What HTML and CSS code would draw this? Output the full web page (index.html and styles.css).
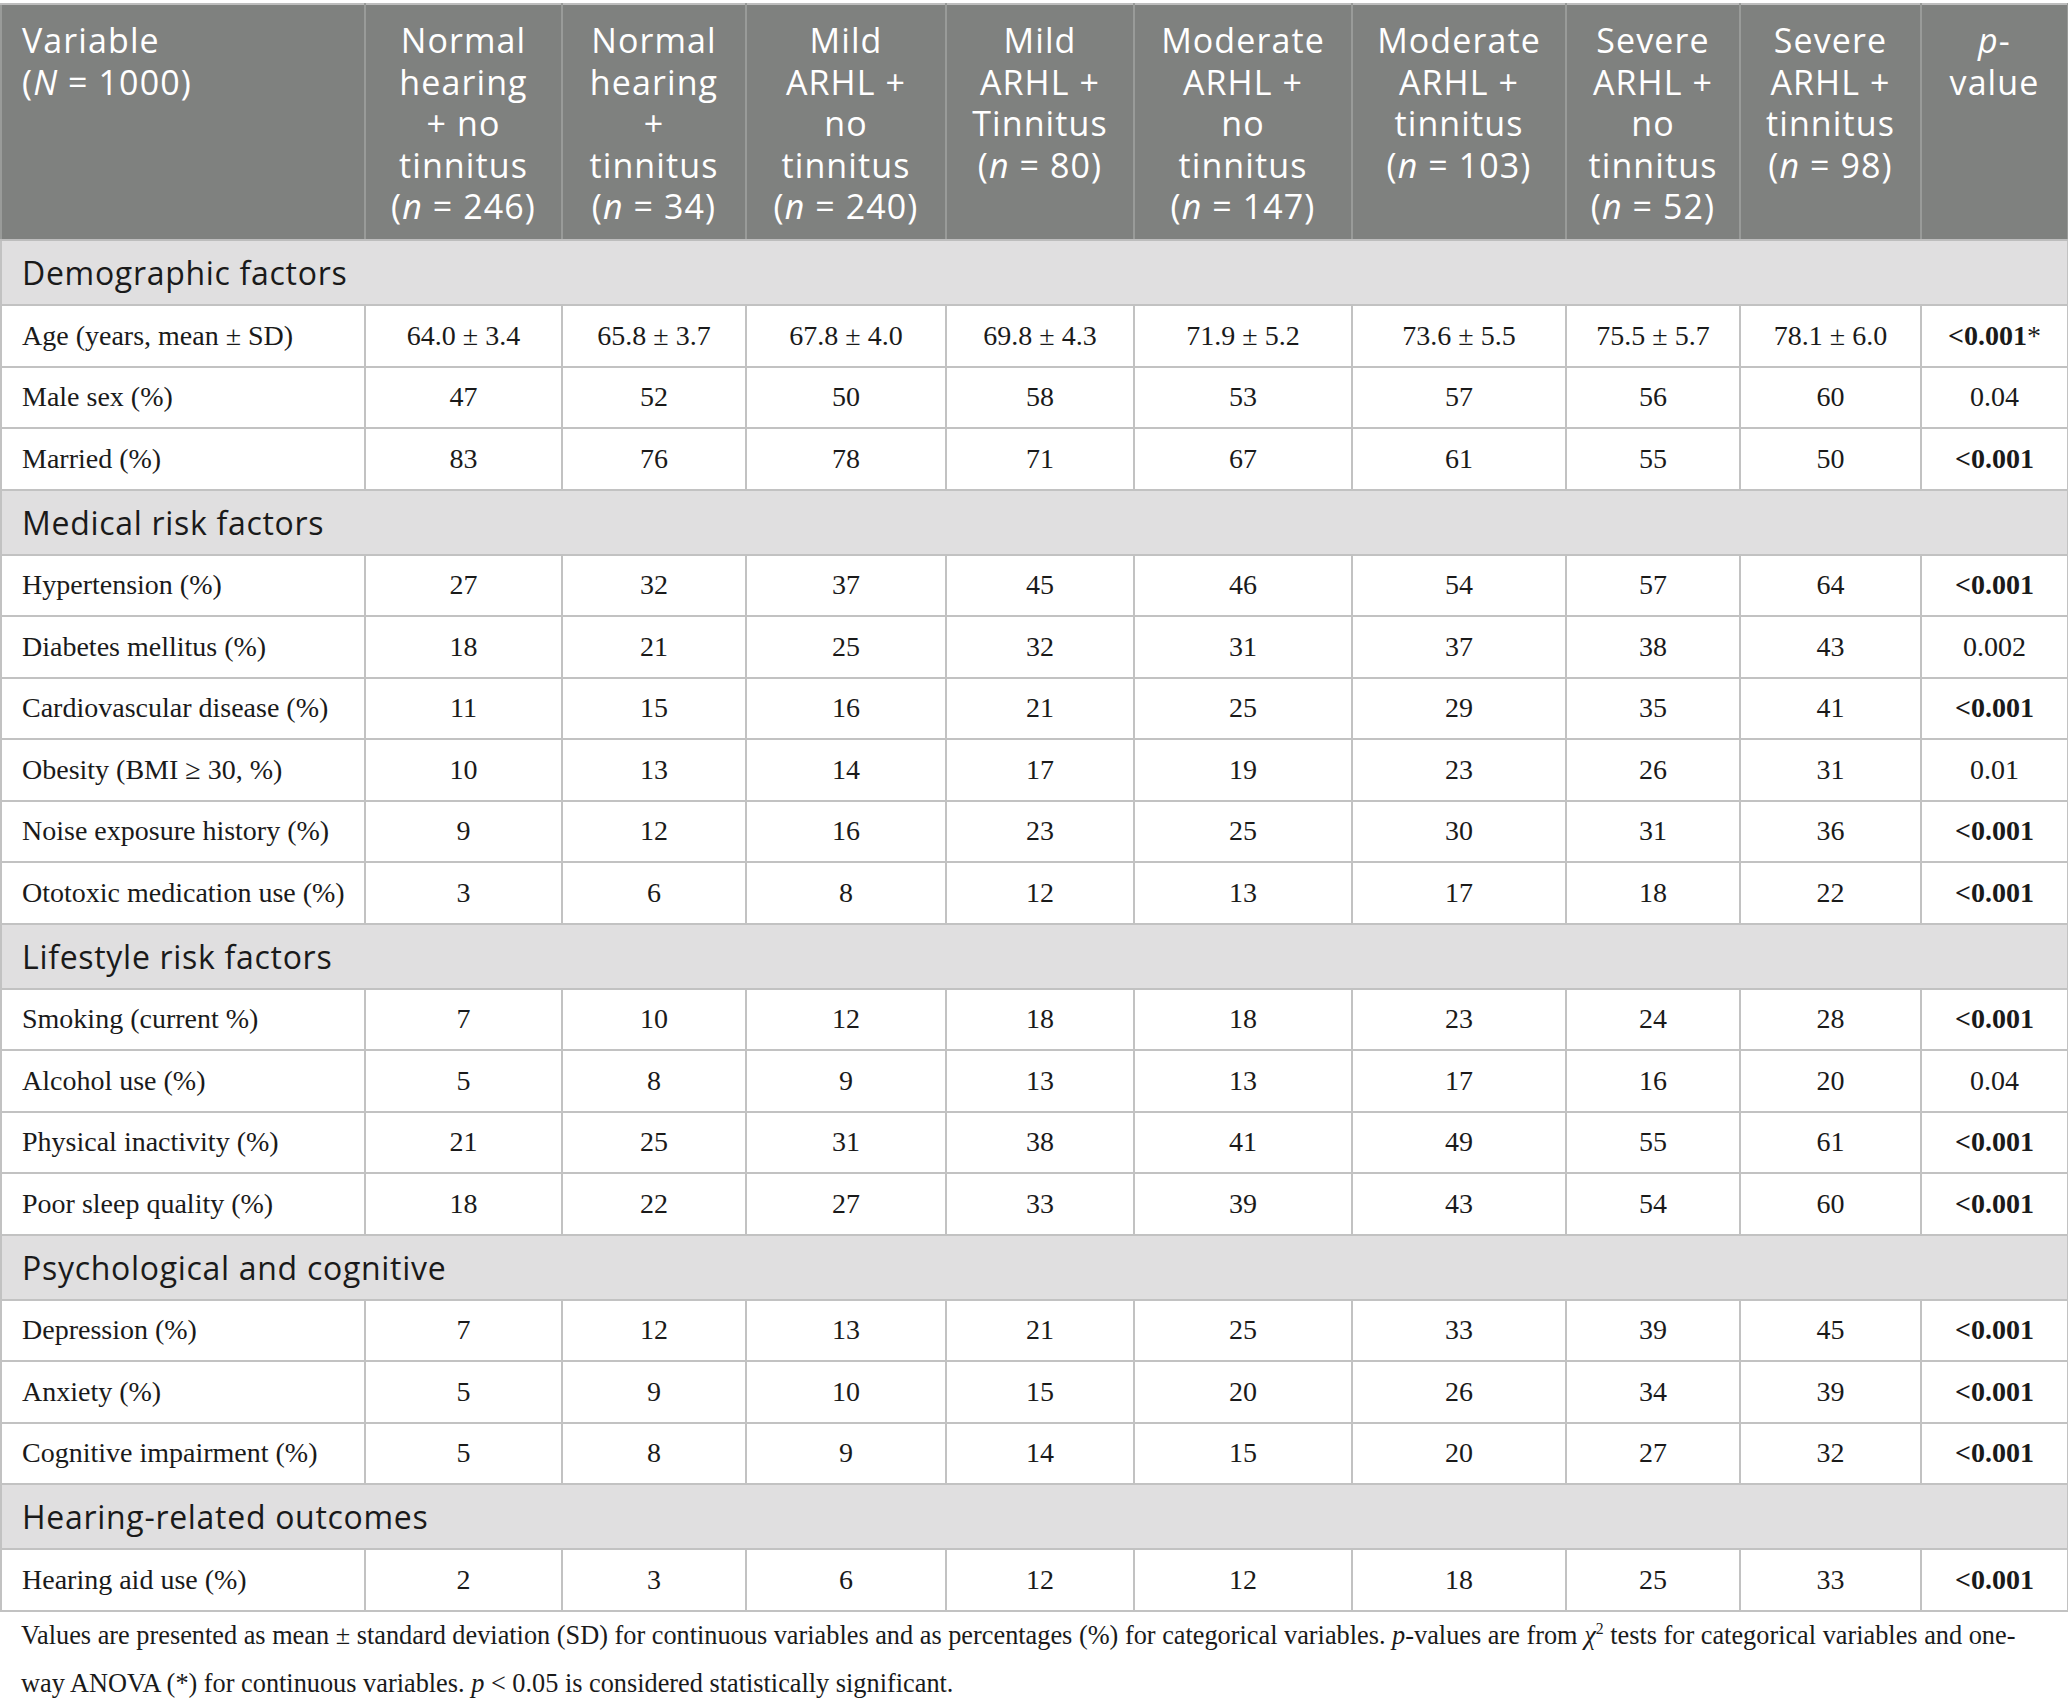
FILE: index.html
```html
<!DOCTYPE html>
<html lang="en">
<head>
<meta charset="utf-8">
<title>Table</title>
<link rel="stylesheet" href="styles.css">
</head>
<body>
<div class="page">
<table class="data-table">
  <colgroup>
    <col class="c-var">
    <col class="c1"><col class="c2"><col class="c3"><col class="c4">
    <col class="c5"><col class="c6"><col class="c7"><col class="c8">
    <col class="c-p">
  </colgroup>
  <thead>
    <tr class="head-row">
      <th class="var">Variable<br>(<i>N</i> = 1000)</th>
      <th>Normal<br>hearing<br>+ no<br>tinnitus<br>(<i>n</i> = 246)</th>
      <th>Normal<br>hearing<br>+<br>tinnitus<br>(<i>n</i> = 34)</th>
      <th>Mild<br>ARHL +<br>no<br>tinnitus<br>(<i>n</i> = 240)</th>
      <th>Mild<br>ARHL +<br>Tinnitus<br>(<i>n</i> = 80)</th>
      <th>Moderate<br>ARHL +<br>no<br>tinnitus<br>(<i>n</i> = 147)</th>
      <th>Moderate<br>ARHL +<br>tinnitus<br>(<i>n</i> = 103)</th>
      <th>Severe<br>ARHL +<br>no<br>tinnitus<br>(<i>n</i> = 52)</th>
      <th>Severe<br>ARHL +<br>tinnitus<br>(<i>n</i> = 98)</th>
      <th><i>p</i>-<br>value</th>
    </tr>
  </thead>
  <tbody>
    <tr class="section-row"><td colspan="10">Demographic factors</td></tr>
    <tr class="body-row"><td class="label">Age (years, mean ± SD)</td><td>64.0 ± 3.4</td><td>65.8 ± 3.7</td><td>67.8 ± 4.0</td><td>69.8 ± 4.3</td><td>71.9 ± 5.2</td><td>73.6 ± 5.5</td><td>75.5 ± 5.7</td><td>78.1 ± 6.0</td><td><b>&lt;0.001</b>*</td></tr>
    <tr class="body-row"><td class="label">Male sex (%)</td><td>47</td><td>52</td><td>50</td><td>58</td><td>53</td><td>57</td><td>56</td><td>60</td><td>0.04</td></tr>
    <tr class="body-row"><td class="label">Married (%)</td><td>83</td><td>76</td><td>78</td><td>71</td><td>67</td><td>61</td><td>55</td><td>50</td><td><b>&lt;0.001</b></td></tr>

    <tr class="section-row"><td colspan="10">Medical risk factors</td></tr>
    <tr class="body-row"><td class="label">Hypertension (%)</td><td>27</td><td>32</td><td>37</td><td>45</td><td>46</td><td>54</td><td>57</td><td>64</td><td><b>&lt;0.001</b></td></tr>
    <tr class="body-row"><td class="label">Diabetes mellitus (%)</td><td>18</td><td>21</td><td>25</td><td>32</td><td>31</td><td>37</td><td>38</td><td>43</td><td>0.002</td></tr>
    <tr class="body-row"><td class="label">Cardiovascular disease (%)</td><td>11</td><td>15</td><td>16</td><td>21</td><td>25</td><td>29</td><td>35</td><td>41</td><td><b>&lt;0.001</b></td></tr>
    <tr class="body-row"><td class="label">Obesity (BMI ≥ 30, %)</td><td>10</td><td>13</td><td>14</td><td>17</td><td>19</td><td>23</td><td>26</td><td>31</td><td>0.01</td></tr>
    <tr class="body-row"><td class="label">Noise exposure history (%)</td><td>9</td><td>12</td><td>16</td><td>23</td><td>25</td><td>30</td><td>31</td><td>36</td><td><b>&lt;0.001</b></td></tr>
    <tr class="body-row"><td class="label">Ototoxic medication use (%)</td><td>3</td><td>6</td><td>8</td><td>12</td><td>13</td><td>17</td><td>18</td><td>22</td><td><b>&lt;0.001</b></td></tr>

    <tr class="section-row"><td colspan="10">Lifestyle risk factors</td></tr>
    <tr class="body-row"><td class="label">Smoking (current %)</td><td>7</td><td>10</td><td>12</td><td>18</td><td>18</td><td>23</td><td>24</td><td>28</td><td><b>&lt;0.001</b></td></tr>
    <tr class="body-row"><td class="label">Alcohol use (%)</td><td>5</td><td>8</td><td>9</td><td>13</td><td>13</td><td>17</td><td>16</td><td>20</td><td>0.04</td></tr>
    <tr class="body-row"><td class="label">Physical inactivity (%)</td><td>21</td><td>25</td><td>31</td><td>38</td><td>41</td><td>49</td><td>55</td><td>61</td><td><b>&lt;0.001</b></td></tr>
    <tr class="body-row"><td class="label">Poor sleep quality (%)</td><td>18</td><td>22</td><td>27</td><td>33</td><td>39</td><td>43</td><td>54</td><td>60</td><td><b>&lt;0.001</b></td></tr>

    <tr class="section-row"><td colspan="10">Psychological and cognitive</td></tr>
    <tr class="body-row"><td class="label">Depression (%)</td><td>7</td><td>12</td><td>13</td><td>21</td><td>25</td><td>33</td><td>39</td><td>45</td><td><b>&lt;0.001</b></td></tr>
    <tr class="body-row"><td class="label">Anxiety (%)</td><td>5</td><td>9</td><td>10</td><td>15</td><td>20</td><td>26</td><td>34</td><td>39</td><td><b>&lt;0.001</b></td></tr>
    <tr class="body-row"><td class="label">Cognitive impairment (%)</td><td>5</td><td>8</td><td>9</td><td>14</td><td>15</td><td>20</td><td>27</td><td>32</td><td><b>&lt;0.001</b></td></tr>

    <tr class="section-row"><td colspan="10">Hearing-related outcomes</td></tr>
    <tr class="body-row"><td class="label">Hearing aid use (%)</td><td>2</td><td>3</td><td>6</td><td>12</td><td>12</td><td>18</td><td>25</td><td>33</td><td><b>&lt;0.001</b></td></tr>
  </tbody>
</table>
<p class="note">Values are presented as mean ± standard deviation (SD) for continuous variables and as percentages (%) for categorical variables. <i>p</i>-values are from <i>χ</i><sup>2</sup> tests for categorical variables and one-way ANOVA (*) for continuous variables. <i>p</i> &lt; 0.05 is considered statistically significant.</p>
</div>
</body>
</html>
```

FILE: styles.css
```css
* {
  box-sizing: border-box;
}

body {
  margin: 0;
  background: #ffffff;
  color: #1a1a1a;
  font-family: "Liberation Serif", "Times New Roman", serif;
}

.page {
  padding-top: 3px;
  width: 2068px;
}

.data-table {
  border-collapse: collapse;
  table-layout: fixed;
  width: 2067px;
}

.c-var { width: 364px; }
.c1 { width: 197px; }
.c2 { width: 184px; }
.c3 { width: 200px; }
.c4 { width: 188px; }
.c5 { width: 218px; }
.c6 { width: 214px; }
.c7 { width: 174px; }
.c8 { width: 181px; }
.c-p { width: 147px; }

.data-table th,
.data-table td {
  border: 2px solid #c2c2c2;
}

.head-row th {
  height: 236px;
  padding: 15px 0 0;
  background: #7f817f;
  color: #ffffff;
  border-color: #999b99;
  border-top-color: #bdbdbd;
  border-bottom-color: #bdbdbd;
  font-family: "Open Sans", "Noto Sans", sans-serif;
  font-weight: 400;
  font-size: 34px;
  letter-spacing: 1.1px;
  line-height: 41.5px;
  text-align: center;
  vertical-align: top;
  white-space: nowrap;
}

.head-row th.var {
  text-align: left;
  padding-left: 20px;
}

.section-row td {
  height: 65px;
  padding: 0 20px;
  background: #e0dfe0;
  color: #1a1a1a;
  font-family: "Open Sans", "Noto Sans", sans-serif;
  font-size: 32px;
  letter-spacing: 0.7px;
  font-weight: 400;
  vertical-align: middle;
}

.body-row td {
  height: 61.5px;
  padding: 0 6px;
  font-size: 28px;
  text-align: center;
  vertical-align: middle;
  white-space: nowrap;
}

.body-row td.label {
  text-align: left;
  padding-left: 20px;
}

.note {
  margin: 0;
  padding: 0 40px 0 21px;
  font-size: 26.3px;
  line-height: 48px;
  color: #1a1a1a;
}

.note sup {
  font-size: 60%;
  line-height: 0;
}
```
